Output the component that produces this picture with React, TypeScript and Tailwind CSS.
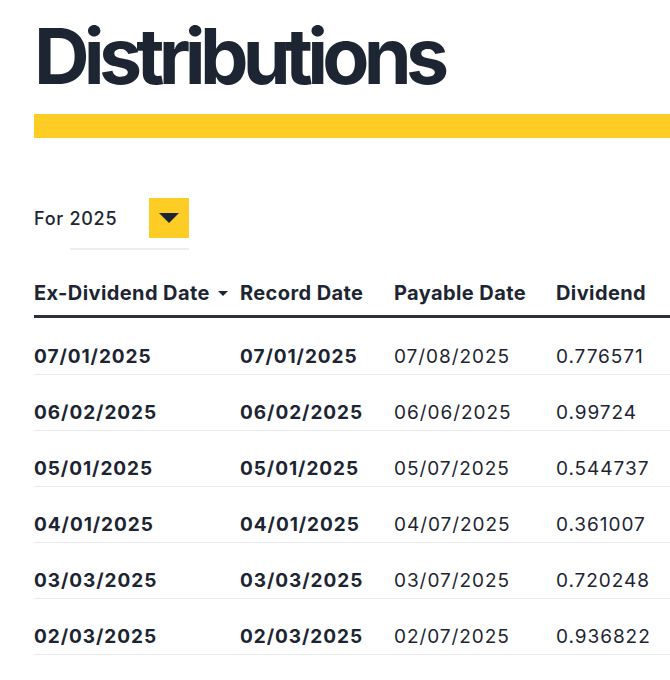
const rows = [
  { ex: '07/01/2025', record: '07/01/2025', payable: '07/08/2025', dividend: '0.776571' },
  { ex: '06/02/2025', record: '06/02/2025', payable: '06/06/2025', dividend: '0.99724' },
  { ex: '05/01/2025', record: '05/01/2025', payable: '05/07/2025', dividend: '0.544737' },
  { ex: '04/01/2025', record: '04/01/2025', payable: '04/07/2025', dividend: '0.361007' },
  { ex: '03/03/2025', record: '03/03/2025', payable: '03/07/2025', dividend: '0.720248' },
  { ex: '02/03/2025', record: '02/03/2025', payable: '02/07/2025', dividend: '0.936822' },
]

export default function App() {
  return (
    <div className="min-h-[680px] bg-white pl-[34px] pt-[18px] text-[#1d2532] font-['Inter',sans-serif] overflow-hidden">
      <h1 className="text-[77px] font-bold leading-none tracking-[-0.075em]">Distributions</h1>

      <div className="mt-[19px] h-[24px] bg-[#fdcd26]" />

      <div className="mt-[60px]">
        <div className="flex items-center">
          <span className="w-[115px] text-[18px] font-medium tracking-[0.04em]">For 2025</span>
          <button className="flex h-[40px] w-[40px] items-center justify-center bg-[#fdcd26]">
            <svg width="20" height="10" viewBox="0 0 20 10">
              <path d="M0 0 L20 0 L10 10 Z" fill="#1d2532" />
            </svg>
          </button>
        </div>
        <div className="ml-[36px] mt-[10px] h-[2px] w-[119px] bg-[#eceef2]" />
      </div>

      <table className="mt-[33px] w-full border-collapse text-left text-[19px] leading-[20px] tracking-[0.05em]">
        <thead>
          <tr className="border-b-[3px] border-[#2a2f38]">
            <th className="w-[206px] pb-[12px] align-bottom text-[20px] font-bold tracking-[0.02em]">
              <span className="flex items-center gap-[8px]">
                Ex-Dividend Date
                <svg width="10" height="5" viewBox="0 0 10 5">
                  <path d="M0 0 L10 0 L5 5 Z" fill="#1d2532" />
                </svg>
              </span>
            </th>
            <th className="w-[154px] pb-[12px] align-bottom text-[20px] font-bold tracking-[0.02em]">Record Date</th>
            <th className="w-[162px] pb-[12px] align-bottom text-[20px] font-bold tracking-[0.02em]">Payable Date</th>
            <th className="pb-[12px] align-bottom text-[20px] font-bold tracking-[0.02em]">Dividend</th>
          </tr>
        </thead>
        <tbody>
          {rows.map((r, i) => {
            const cell = i === 0 ? 'h-[58px] pb-[7px] align-bottom' : 'h-[56px] pb-[7px] align-bottom'
            return (
              <tr key={r.ex} className="border-b border-[#e6e8ec]">
                <td className={cell + ' font-bold'}>{r.ex}</td>
                <td className={cell + ' font-bold'}>{r.record}</td>
                <td className={cell}>{r.payable}</td>
                <td className={cell}>{r.dividend}</td>
              </tr>
            )
          })}
        </tbody>
      </table>
    </div>
  )
}
